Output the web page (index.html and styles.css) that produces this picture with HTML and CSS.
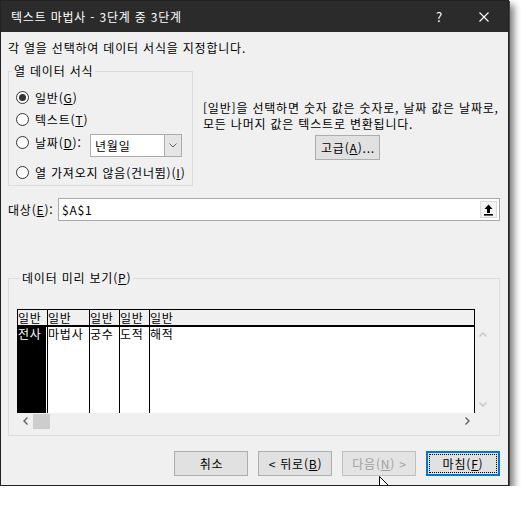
FILE: index.html
```html
<!DOCTYPE html>
<html lang="ko">
<head>
<meta charset="utf-8">
<title>텍스트 마법사</title>
<link rel="stylesheet" href="styles.css">
</head>
<body>
<div class="window">
  <div class="titlebar">
    <span class="title">텍스트 마법사 - 3단계 중 3단계</span>
    <span class="help">?</span>
    <span class="close"><svg width="10" height="10" viewBox="0 0 10 10"><path d="M0.5 0.5L9.5 9.5M9.5 0.5L0.5 9.5" stroke="#fff" stroke-width="1.1" fill="none"/></svg></span>
  </div>
  <div class="body">
    <p class="intro">각 열을 선택하여 데이터 서식을 지정합니다.</p>
    <div class="top">
      <fieldset class="group fmt">
        <legend>열 데이터 서식</legend>
        <div class="opt r1"><span class="radio on"></span><span>일반(<u>G</u>)</span></div>
        <div class="opt r2"><span class="radio"></span><span>텍스트(<u>T</u>)</span></div>
        <div class="opt r3"><span class="radio"></span><span class="lbl-date">날짜(<u>D</u>):</span>
          <div class="combo"><span class="combo-val">년월일</span><span class="combo-btn"><svg width="8" height="5" viewBox="0 0 8 5"><path d="M0.5 0.5L4 4L7.5 0.5" stroke="#606060" stroke-width="1" fill="none"/></svg></span></div>
        </div>
        <div class="opt r4"><span class="radio"></span><span>열 가져오지 않음(건너뜀)(<u>I</u>)</span></div>
      </fieldset>
      <div class="info">
        <p class="info-text">[일반]을 선택하면 숫자 값은 숫자로, 날짜 값은 날짜로,<br>모든 나머지 값은 텍스트로 변환됩니다.</p>
        <button class="btn adv">고급(<u>A</u>)...</button>
      </div>
    </div>
    <div class="dest">
      <span class="dest-lbl">대상(<u>E</u>):</span>
      <div class="field">
        <span class="field-val">$A$1</span>
        <span class="pick"><svg width="9" height="12" viewBox="0 0 9 12"><path d="M4.5 0.5L0.5 5H3V9H6V5H8.5Z" fill="#000"/><rect x="0" y="10" width="9" height="1.6" fill="#000"/></svg></span>
      </div>
    </div>
    <fieldset class="group preview">
      <legend>데이터 미리 보기(<u>P</u>)</legend>
      <div class="pv">
        <div class="pv-main">
          <div class="sheet">
            <div class="col c1 sel"><div class="hd">일반</div><div class="cell">전사</div></div>
            <div class="col c2"><div class="hd">일반</div><div class="cell">마법사</div></div>
            <div class="col c3"><div class="hd">일반</div><div class="cell">궁수</div></div>
            <div class="col c4"><div class="hd">일반</div><div class="cell">도적</div></div>
            <div class="col c5"><div class="hd">일반</div><div class="cell">해적</div></div>
          </div>
          <div class="vscroll">
            <svg width="8" height="5" viewBox="0 0 8 5"><path d="M0.5 4.5L4 1L7.5 4.5" stroke="#c4c4c4" stroke-width="1.4" fill="none"/></svg>
            <svg width="8" height="5" viewBox="0 0 8 5"><path d="M0.5 0.5L4 4L7.5 0.5" stroke="#c4c4c4" stroke-width="1.4" fill="none"/></svg>
          </div>
        </div>
        <div class="hscroll">
          <span class="arr"><svg width="5" height="8" viewBox="0 0 5 8"><path d="M4.5 0.5L1 4L4.5 7.5" stroke="#606060" stroke-width="1.4" fill="none"/></svg></span>
          <span class="thumb"></span>
          <span class="arr right"><svg width="5" height="8" viewBox="0 0 5 8"><path d="M0.5 0.5L4 4L0.5 7.5" stroke="#606060" stroke-width="1.4" fill="none"/></svg></span>
        </div>
      </div>
    </fieldset>
    <div class="actions">
      <button class="btn">취소</button>
      <button class="btn">&lt; 뒤로(<u>B</u>)</button>
      <button class="btn disabled">다음(<u>N</u>) &gt;</button>
      <button class="btn primary"><span class="focus">마침(<u>F</u>)</span></button>
    </div>
  </div>
  <svg class="cursor" width="12" height="11" viewBox="0 0 12 11"><path d="M0.5 0.5L0.5 11L11 11Z" fill="#fff" stroke="#000" stroke-width="1"/></svg>
</div>
</body>
</html>
```

FILE: styles.css
```css
* { box-sizing: border-box; }
html, body { margin: 0; padding: 0; background: #fff; }
body {
  font-family: "Noto Sans CJK KR", "Noto Sans", sans-serif;
  font-size: 12px;
  letter-spacing: 0.8px;
  color: #000;
}
u { text-decoration: underline; text-underline-offset: 1px; }

.window {
  position: relative;
  width: 509px;
  border: 1px solid #232323;
  background: #f0f0f0;
  box-shadow: 1px 1px 0 #444, 5px 5px 7px rgba(0,0,0,0.5);
  overflow: hidden;
}

.titlebar {
  height: 31px;
  background: #2b2b2b;
  color: #fff;
  display: flex;
  align-items: center;
  padding-left: 10px;
  line-height: 16px;
}
.title { flex: 1; }
.help { font-size: 13px; margin-right: 36px; }
.close { display: flex; margin-right: 19px; }

.body { padding: 0 8px 9px 7px; }

.intro { margin: 0; padding-top: 8px; line-height: 16px; white-space: nowrap; }

.top { display: flex; align-items: flex-start; margin-top: 7px; }

.group {
  margin: 0;
  padding: 0;
  border: 1px solid #dcdcdc;
  min-width: 0;
}
.group legend {
  margin-left: 3px;
  padding: 0 2px;
  line-height: 16px;
}

.fmt { width: 185px; flex: none; padding-bottom: 2px; }
.opt { display: flex; align-items: center; height: 22px; white-space: nowrap; }
.r1 { margin-top: 7px; }
.r3 { margin-top: 1px; height: 26px; align-items: flex-start; }
.r3 > .radio { margin-top: 5px; }
.r3 > span { line-height: 23px; }
.r4 { margin-top: 4px; }

.radio {
  flex: none;
  width: 13px;
  height: 13px;
  border: 1px solid #333;
  border-radius: 50%;
  background: #fff;
  margin-left: 7px;
  margin-right: 6px;
  display: flex;
  align-items: center;
  justify-content: center;
}
.radio.on::after {
  content: "";
  width: 7px;
  height: 7px;
  border-radius: 50%;
  background: #333;
}

.lbl-date { width: 55px; flex: none; }
.combo {
  margin-top: 3px;
  width: 92px;
  height: 23px;
  border: 1px solid #acacac;
  background: #fff;
  display: flex;
}
.combo-val { flex: 1; padding-left: 4px; line-height: 21px; }
.combo-btn {
  width: 17px;
  background: #e5e5e5;
  border-left: 1px solid #acacac;
  display: flex;
  align-items: center;
  justify-content: center;
}

.info { margin-left: 10px; padding-top: 37px; }
.info-text { margin: 0; line-height: 16px; white-space: nowrap; }

.btn {
  font: inherit;
  letter-spacing: 0.8px;
  color: #000;
  width: 74px;
  height: 25px;
  padding: 0 0 0 1px;
  background: #e1e1e1;
  border: 1px solid #adadad;
  display: flex;
  align-items: center;
  justify-content: center;
  line-height: 16px;
}
.adv { width: 65px; margin: 3px 0 0 112px; }

.dest { display: flex; align-items: center; margin-top: 12px; }
.dest-lbl { width: 50px; line-height: 16px; flex: none; }
.field {
  flex: 1;
  height: 23px;
  border: 1px solid #a9a9a9;
  background: #fff;
  display: flex;
  align-items: center;
  padding-left: 3px;
}
.field-val { flex: 1; line-height: 16px; }
.pick {
  width: 17px;
  height: 17px;
  margin-right: 2px;
  background: #f4f4f4;
  border: 1px solid #dadada;
  display: flex;
  align-items: center;
  justify-content: center;
}

.preview { margin-top: 49px; padding: 23px 7px 6px 8px; }
.pv { display: flex; flex-direction: column; }
.pv-main { display: flex; }
.sheet {
  width: 458px;
  height: 104px;
  display: flex;
  border-right: 1px solid #000;
}
.col { display: flex; flex-direction: column; border-left: 1px solid #000; overflow: hidden; }
.c1 { width: 30px; }
.c2 { width: 42px; }
.c3, .c4 { width: 30px; }
.c5 { flex: 1; }
.hd {
  height: 18px;
  border-top: 1px solid #000;
  border-bottom: 2px solid #000;
  background: #f0f0f0;
  line-height: 15px;
  white-space: nowrap;
}
.cell { flex: 1; background: #fff; line-height: 14px; white-space: nowrap; }
.sel .cell { background: #000; color: #fff; border-right: 1px solid #fff; }

.vscroll {
  width: 16px;
  margin-top: 18px;
  height: 86px;
  display: flex;
  flex-direction: column;
  justify-content: space-between;
  align-items: center;
  padding: 5px 0 6px;
}
.hscroll { width: 458px; height: 16px; display: flex; align-items: center; }
.arr { width: 16px; height: 16px; display: flex; align-items: center; justify-content: center; }
.arr.right { margin-left: auto; }
.thumb { width: 17px; height: 15px; background: #cdcdcd; }

.actions { display: flex; justify-content: flex-end; gap: 10px; margin-top: 15px; }
.disabled { color: #a0a0a0; border-color: #bfbfbf; background: #e3e3e3; }
.primary { border: 2px solid #0078d7; padding: 1px; }
.focus {
  width: 100%;
  height: 100%;
  border: 1px dotted #000;
  display: flex;
  align-items: center;
  justify-content: center;
}

.cursor { position: absolute; left: 378px; top: 475px; }
```
